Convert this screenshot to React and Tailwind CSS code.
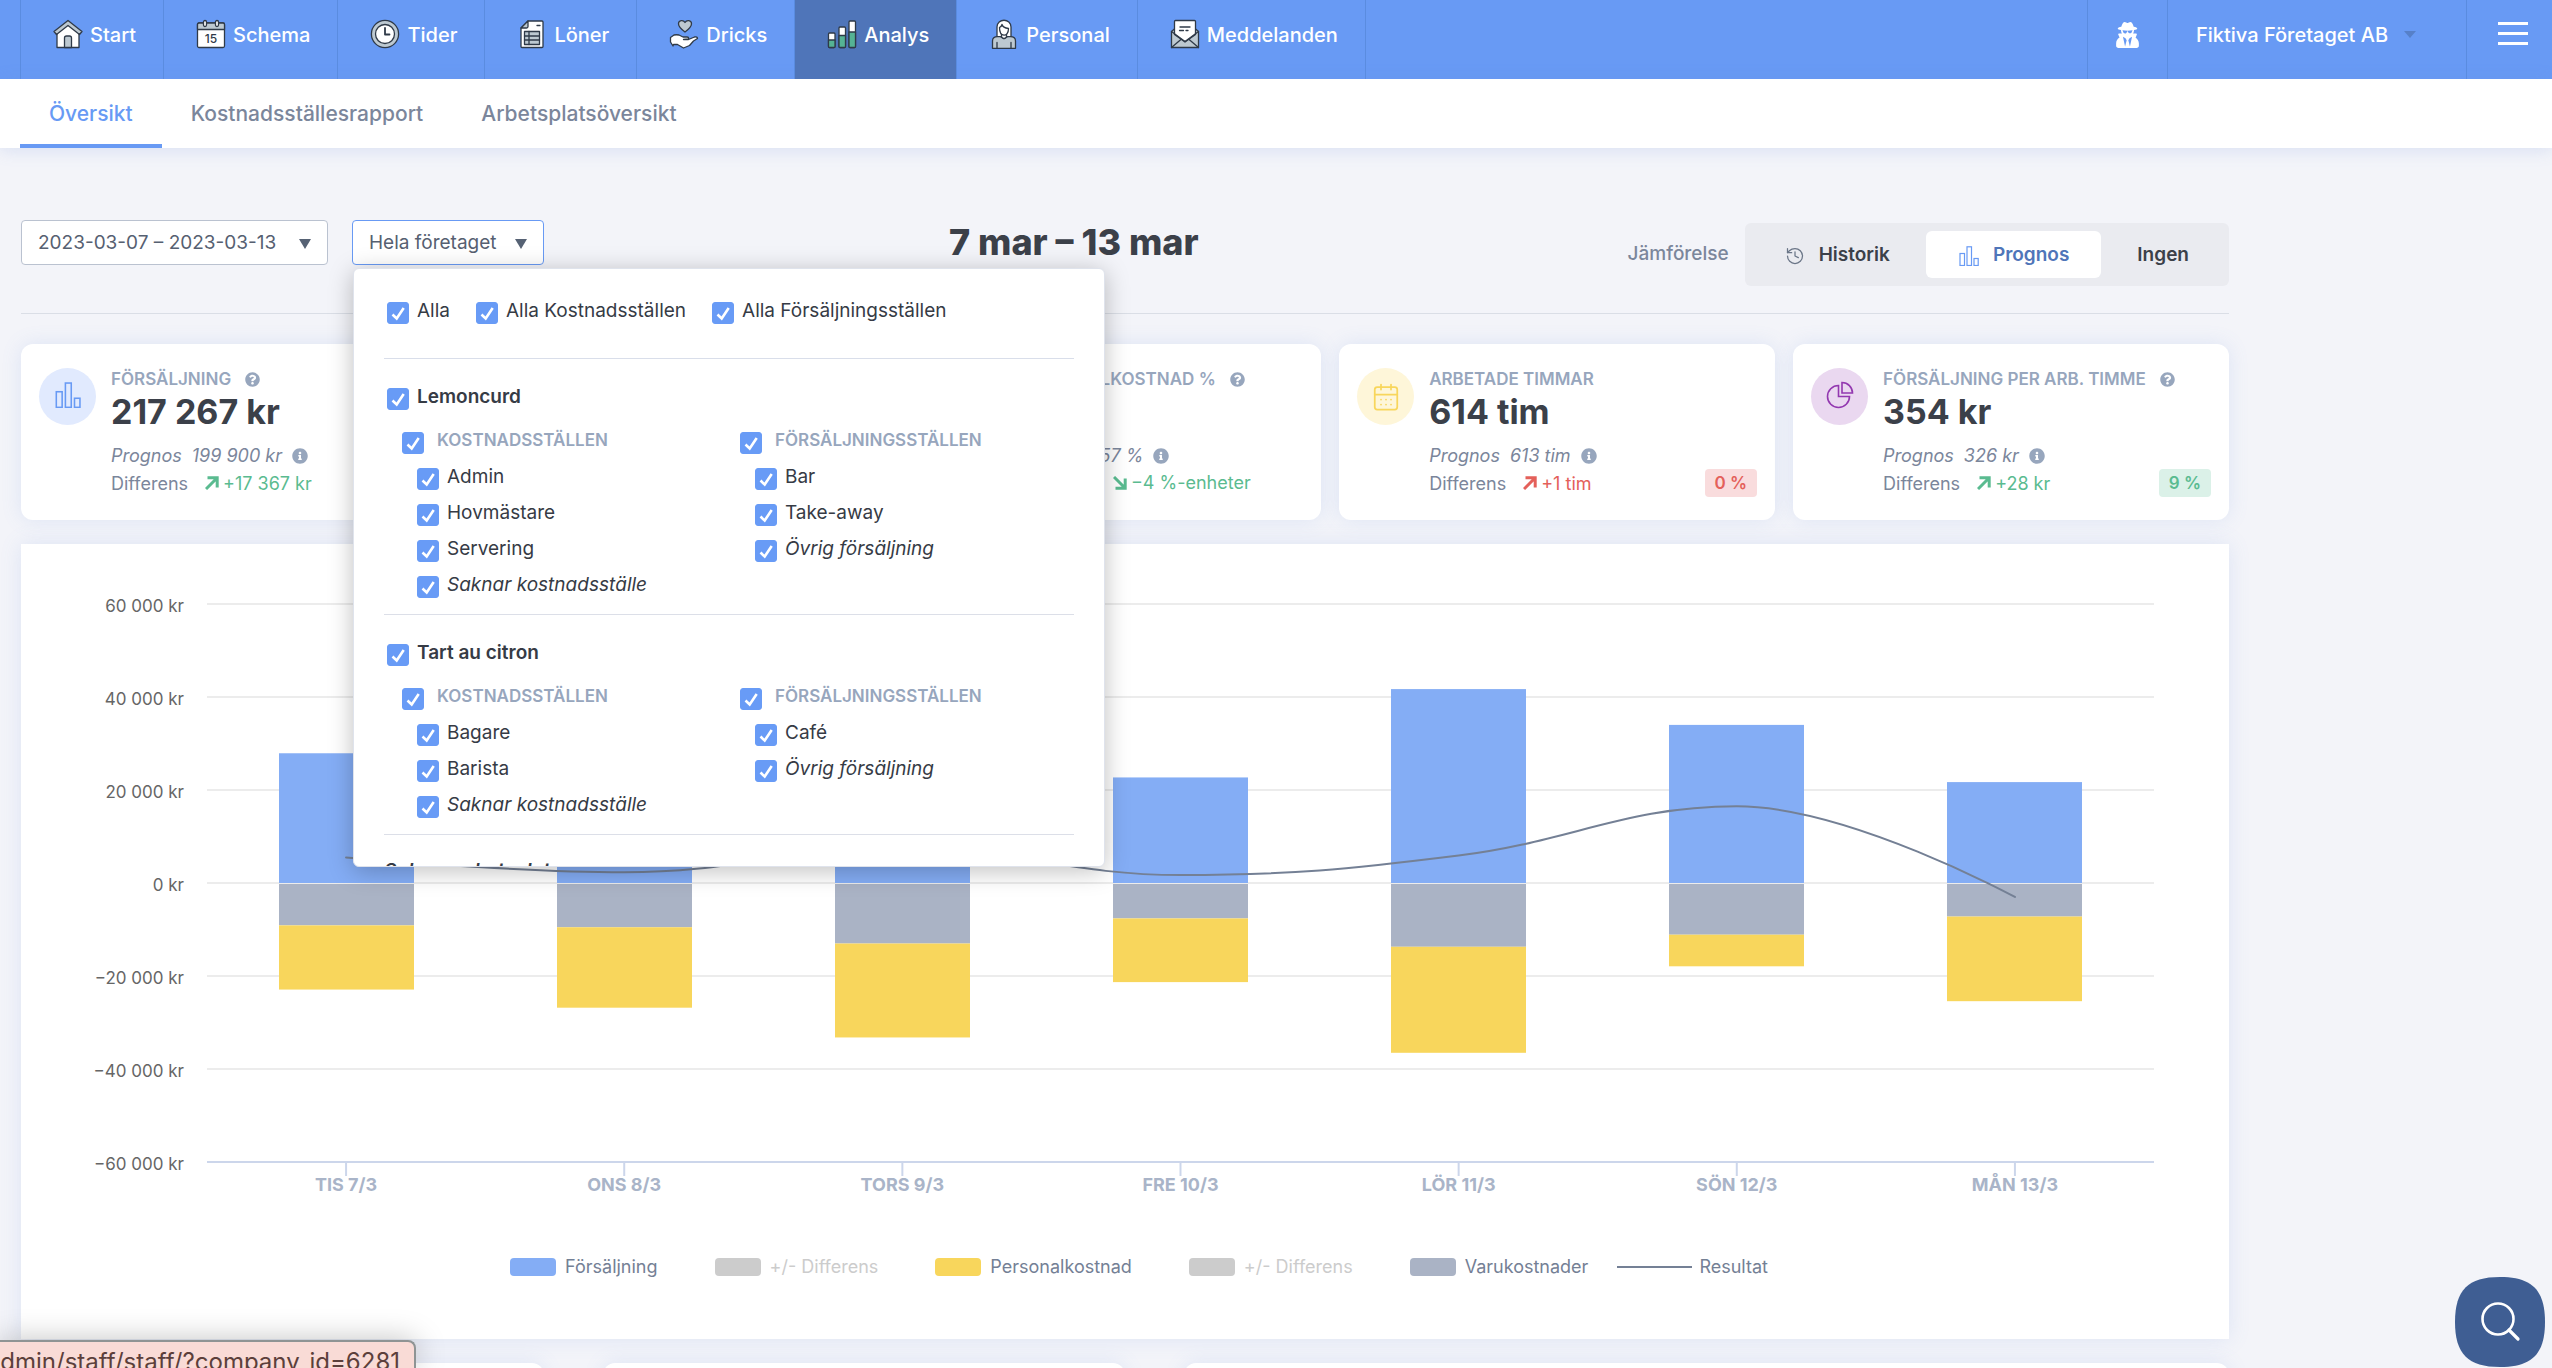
import React, { useState } from 'react';
import { CalendarDays, History } from 'lucide-react';
import { FaInfoCircle, FaQuestionCircle, FaUserSecret } from 'react-icons/fa';

const INK = '#2f3a48';
const TINT = '#bdc9d1';

const nav = [
  { label: 'Start', icon: HouseIcon },
  { label: 'Schema', icon: ScheduleIcon },
  { label: 'Tider', icon: ClockIcon },
  { label: 'Löner', icon: SheetIcon },
  { label: 'Dricks', icon: TipIcon },
  { label: 'Analys', icon: StatsIcon, active: true },
  { label: 'Personal', icon: PersonIcon },
  { label: 'Meddelanden', icon: MailIcon },
];

const tabs = ['Översikt', 'Kostnadsställesrapport', 'Arbetsplatsöversikt'];

const workplaces = [
  {
    name: 'Lemoncurd',
    cost: ['Admin', 'Hovmästare', 'Servering'],
    sales: ['Bar', 'Take-away'],
  },
  {
    name: 'Tart au citron',
    cost: ['Bagare', 'Barista'],
    sales: ['Café'],
  },
];

const stats = [
  { title: 'Försäljning', value: '217 267 kr', forecast: '199 900 kr', diff: '+17 367 kr', up: true, good: true, badge: '9 %', help: true, icon: 'bars' },
  { title: 'Resultat', value: '–', forecast: '–', diff: '–', up: true, good: true, icon: 'bars' },
  { title: 'Personalkostnad %', value: '53 %', forecast: '57 %', diff: '−4 %-enheter', up: false, good: true, help: true, icon: 'pie' },
  { title: 'Arbetade timmar', value: '614 tim', forecast: '613 tim', diff: '+1 tim', up: true, good: false, badge: '0 %', icon: 'calendar' },
  { title: 'Försäljning per arb. timme', value: '354 kr', forecast: '326 kr', diff: '+28 kr', up: true, good: true, badge: '9 %', help: true, icon: 'pie' },
];

// amounts in kr
const days = [
  { label: 'TIS 7/3', sales: 27900, goods: 8900, staff: 13800, result: 5500 },
  { label: 'ONS 8/3', sales: 27500, goods: 9300, staff: 17300, result: 2300 },
  { label: 'TORS 9/3', sales: 40500, goods: 12800, staff: 20200, result: 7500 },
  { label: 'FRE 10/3', sales: 22700, goods: 7400, staff: 13700, result: 1700 },
  { label: 'LÖR 11/3', sales: 41700, goods: 13500, staff: 22800, result: 5900 },
  { label: 'SÖN 12/3', sales: 34000, goods: 10900, staff: 6800, result: 16500 },
  { label: 'MÅN 13/3', sales: 21700, goods: 7000, staff: 18200, result: -3000 },
];

const legend = [
  { label: 'Försäljning', swatch: 'bg-[#84adf5]', text: 'text-[#748095]' },
  { label: '+/- Differens', swatch: 'bg-[#cccccc]', text: 'text-[#cccccc]' },
  { label: 'Personalkostnad', swatch: 'bg-[#f8d65c]', text: 'text-[#748095]' },
  { label: '+/- Differens', swatch: 'bg-[#cccccc]', text: 'text-[#cccccc]' },
  { label: 'Varukostnader', swatch: 'bg-[#aab3c5]', text: 'text-[#748095]' },
];

export default function App() {
  return (
    <div className="relative h-screen overflow-hidden bg-[#f3f4f9] font-['Inter',sans-serif] text-[#3b4049]">
      <TopBar />
      <SubNav />
      <main className="max-w-[2229px] pl-[21px] pt-[72px]">
        <Filters />
        <section className="mt-[30px] grid grid-cols-[10fr_10fr_9fr_10fr_10fr] gap-[18px]">
          {stats.map(s => <StatCard key={s.title} {...s} />)}
        </section>
        <section className="mt-6 bg-white pb-[59px] shadow-[0_0_20px_rgba(104,140,220,0.15)]">
          <Chart />
          <Legend />
        </section>
        <section className="mt-6 grid grid-cols-[1fr_1fr_2fr] gap-[59px]">
          <div className="h-40 rounded-xl bg-white shadow-[0_0_20px_rgba(104,140,220,0.15)]" />
          <div className="h-40 rounded-xl bg-white shadow-[0_0_20px_rgba(104,140,220,0.15)]" />
          <div className="h-40 rounded-xl bg-white shadow-[0_0_20px_rgba(104,140,220,0.15)]" />
        </section>
      </main>

      <div className="absolute bottom-0 left-0 flex h-7 w-[416px] justify-end overflow-hidden rounded-tr-lg border-r-2 border-t-2 border-[#8f9494] bg-[#f9dbd6] pr-3.5 pt-1 text-2xl text-[#5c3f3b] shadow-[0_0_30px_rgba(0,0,0,0.25)]">
        <span className="whitespace-nowrap">/admin/staff/staff/?company_id=6281</span>
      </div>

      <button aria-label="Sök" className="absolute bottom-px right-[7px] h-[90px] w-[90px]">
        <svg viewBox="0 0 90 90" className="h-full w-full">
          <path d="M45 0C77 0 90 13 90 45S77 90 45 90 0 77 0 45 13 0 45 0Z" fill="#3f5e93" />
          <circle cx="43" cy="42" r="15.5" fill="none" stroke="#fff" strokeWidth="2.6" />
          <path d="M54 53l9 9" stroke="#fff" strokeWidth="3.2" strokeLinecap="round" />
        </svg>
      </button>
    </div>
  );
}

function TopBar() {
  return (
    <header className="flex h-[79px] justify-between bg-[#689af4] text-xl font-medium leading-8 text-white">
      <nav className="ml-5 flex border-l border-[#5a8ce0]">
        {nav.map(({ label, icon: Icon, active }) => (
          <a
            key={label}
            href="#"
            className={'flex gap-[7px] border-r border-[#5a8ce0] pl-8 pr-[27px] pt-[19px] ' + (active ? 'bg-[#4f75b9]' : '')}
          >
            <svg viewBox="0 0 30 30" className="h-[30px] w-[30px]" fill="#fff" stroke={INK} strokeWidth="1.3" strokeLinejoin="round" strokeLinecap="round">
              <Icon />
            </svg>
            {label}
          </a>
        ))}
      </nav>
      <div className="flex">
        <button aria-label="Inkognito" className="flex w-20 justify-center border-l border-[#5a8ce0] pt-[22px]">
          <FaUserSecret className="h-[26px] w-[23px]" />
        </button>
        <button className="flex w-[299px] gap-4 border-l border-[#5a8ce0] pl-7 pt-[19px]">
          Fiktiva Företaget AB
          <svg viewBox="0 0 12 7" className="mt-3 h-[7px] w-3"><path d="M0 0h12L6 7z" fill="#5680c9" /></svg>
        </button>
        <button aria-label="Meny" className="flex w-[86px] flex-col gap-[7px] border-l border-[#5a8ce0] pl-[31px] pt-[22px]">
          <span className="h-[3px] w-[30px] bg-white" />
          <span className="h-[3px] w-[30px] bg-white" />
          <span className="h-[3px] w-[30px] bg-white" />
        </button>
      </div>
    </header>
  );
}

function SubNav() {
  return (
    <nav className="flex h-[69px] bg-white pl-5 text-[21px] font-medium leading-[70px] text-[#7b869b] shadow-[0_2px_16px_rgba(104,140,220,0.2)]">
      {tabs.map((tab, i) => (
        <a key={tab} href="#" className={'px-[29px] ' + (i === 0 ? 'border-b-4 border-[#689af4] text-[#689af4]' : '')}>{tab}</a>
      ))}
    </nav>
  );
}

function Triangle() {
  return <svg viewBox="0 0 12 10" className="h-[10px] w-3"><path d="M0 0h12L6 10z" fill="#566274" /></svg>;
}

function Filters() {
  const [open, setOpen] = useState(true);
  return (
    <div className="flex items-start justify-between border-b border-[#dadee6] pb-[27px]">
      <div className="flex gap-6 text-[19px] text-[#566071]">
        <button className="flex h-[45px] min-w-[307px] items-center justify-between rounded border border-[#bac2d0] bg-white px-4 pt-0.5">
          2023-03-07 – 2023-03-13
          <Triangle />
        </button>
        <div className="relative">
          <button onClick={() => setOpen(!open)} className="flex h-[45px] min-w-[192px] items-center justify-between gap-4 rounded border border-[#689af4] bg-white px-4 pt-0.5">
            Hela företaget
            <Triangle />
          </button>
          {open && <PlacePicker />}
        </div>
      </div>
      <h1 className="mr-6 text-4xl font-extrabold leading-[44px]">7 mar – 13 mar</h1>
      <div className="mt-[3px] flex items-center gap-4 text-[19px] font-medium text-[#7b869b]">
        Jämförelse
        <div className="flex rounded-md bg-[#eaebf0] p-2 font-semibold text-[#3b4049]">
          <button className="flex h-[47px] items-center gap-3.5 pl-8 pr-9 pt-0.5">
            <History className="h-5 w-5 text-[#6a7587]" strokeWidth={1.5} />
            Historik
          </button>
          <button className="flex h-[47px] items-center gap-3.5 rounded-md bg-white pl-[33px] pr-8 pt-0.5 text-[#4f75b9]">
            <svg viewBox="0 0 20 20" className="h-5 w-5"><BarsGlyph /></svg>
            Prognos
          </button>
          <button className="h-[47px] pl-9 pr-8 pt-0.5">Ingen</button>
        </div>
      </div>
    </div>
  );
}

function Check({ className = '', textClass = '', children }) {
  return (
    <label className={'flex h-9 items-center gap-2 ' + className}>
      <span className="mt-[3px] grid">
        <input type="checkbox" defaultChecked className="peer col-start-1 row-start-1 h-[22px] w-[22px] appearance-none rounded-[3px] border border-[#689bf6] bg-white checked:bg-[#689bf6]" />
        <svg viewBox="0 0 22 22" className="pointer-events-none invisible col-start-1 row-start-1 h-[22px] w-[22px] peer-checked:visible">
          <path d="M5.5 12.5l4.2 4 7-10.5" fill="none" stroke="#fff" strokeWidth="2.6" />
        </svg>
      </span>
      <span className={textClass}>{children}</span>
    </label>
  );
}

function PlacePicker() {
  const group = 'pl-[5px] text-[17px] font-semibold uppercase text-[#97a6bd]';
  return (
    <div className="absolute left-px top-12 z-10 h-[599px] w-[752px] overflow-hidden rounded-md border border-[#dfe3ec] bg-white px-[30px] pt-6 text-[19px] text-[#363b45] shadow-[0_4px_24px_rgba(0,0,0,0.25)]">
      <div className="flex gap-[26px] border-b border-[#d9deea] pb-[29px] pl-[3px]">
        <Check>Alla</Check>
        <Check>Alla Kostnadsställen</Check>
        <Check>Alla Försäljningsställen</Check>
      </div>
      {workplaces.map(w => (
        <div key={w.name} className="border-b border-[#dcdfe8] pb-[11px] pl-[3px] pt-5">
          <Check textClass="font-semibold">{w.name}</Check>
          <div className="mt-2 grid grid-cols-2 gap-x-1 pl-[15px]">
            <div>
              <Check textClass={group}>Kostnadsställen</Check>
              {w.cost.map(c => <Check key={c} className="pl-[15px]">{c}</Check>)}
              <Check className="pl-[15px]" textClass="italic">Saknar kostnadsställe</Check>
            </div>
            <div>
              <Check textClass={group}>Försäljningsställen</Check>
              {w.sales.map(s => <Check key={s} className="pl-[15px]">{s}</Check>)}
              <Check className="pl-[15px]" textClass="italic">Övrig försäljning</Check>
            </div>
          </div>
        </div>
      ))}
      <div className="pt-[22px] font-semibold italic">Saknar arbetsplats</div>
    </div>
  );
}

const circles = {
  bars: 'bg-[#e1eafe]',
  calendar: 'bg-[#fef6d9]',
  pie: 'bg-[#ead8f0]',
};

function StatCard({ title, value, forecast, diff, up, good, badge, help, icon }) {
  return (
    <article className="flex h-44 gap-[15px] rounded-xl bg-white px-[18px] pt-6 shadow-[0_0_20px_rgba(104,140,220,0.15)]">
      <div className={'flex h-[57px] w-[57px] shrink-0 items-center justify-center rounded-full ' + circles[icon]}>
        {icon === 'bars' && <svg viewBox="0 0 20 20" className="mb-1 h-[26px] w-[26px]"><BarsGlyph /></svg>}
        {icon === 'calendar' && (
          <CalendarDays className="h-[30px] w-[30px] text-[#f8d65c]" strokeWidth={1.4} />
        )}
        {icon === 'pie' && (
          <svg viewBox="0 0 28 28" className="mb-1 h-7 w-7" fill="none" stroke="#9338b0" strokeWidth="1.6">
            <path d="M12.5 4.5a11 11 0 1 0 11 11h-11z" />
            <path d="M16 1.5v10.5h10.5A10.5 10.5 0 0 0 16 1.5z" />
          </svg>
        )}
      </div>
      <div className="min-w-0 flex-1 text-lg text-[#7b869b]">
        <h2 className="flex items-center gap-3.5 whitespace-nowrap text-[17px] font-semibold uppercase leading-[22px] text-[#97a6bd]">
          {title}
          {help && <FaQuestionCircle className="h-[15px] w-[15px]" />}
        </h2>
        <p className="text-[34px] font-bold leading-[44px] text-[#3b4049]">{value}</p>
        <p className="mt-2 flex items-center gap-2.5 italic leading-[27px]">
          Prognos <span>{forecast}</span>
          <FaInfoCircle className="h-4 w-4 text-[#97a6bd]" />
        </p>
        <div className="flex items-center leading-[27px]">
          Differens
          <span className={'ml-[17px] flex items-center gap-1 ' + (good ? 'text-[#5abb90]' : 'text-[#e4605a]')}>
            <svg viewBox="0 0 14 14" className="h-3.5 w-3.5" fill="none" stroke="currentColor" strokeWidth="3">
              {up ? <path d="M1 13L11.5 2.5M2.5 1.8h9.7v9.7" /> : <path d="M1 1l10.500 10.500M12.200 2.500v9.700H2.500" />}
            </svg>
            {diff}
          </span>
          {badge && (
            <span className={'ml-auto rounded px-2.5 text-[17px] font-semibold leading-7 ' + (good ? 'bg-[#dbf1e8] text-[#5abb90]' : 'bg-[#f9dcdd] text-[#e4605a]')}>
              {badge}
            </span>
          )}
        </div>
      </div>
    </article>
  );
}

const LEFT = 186;
const RIGHT = 2133;
const ZERO = 339;
const STEP = (RIGHT - LEFT) / days.length;
const BAR = 135;

function px(kr) {
  return (kr * 93) / 20000;
}

function formatKr(kr) {
  const n = Math.abs(kr).toString().replace(/000$/, ' 000');
  return (kr < 0 ? '−' : '') + n + ' kr';
}

// smoothed line whose control points never pass the neighbouring values
function spline(points) {
  let d = `M${points[0].x} ${points[0].y}`;
  let out = points[0];
  for (let i = 1; i < points.length; i++) {
    const p = points[i];
    const prev = points[i - 1];
    const next = points[i + 1];
    let left = p;
    let right = p;
    if (next) {
      left = { x: (1.5 * p.x + prev.x) / 2.5, y: (1.5 * p.y + prev.y) / 2.5 };
      right = { x: (1.5 * p.x + next.x) / 2.5, y: (1.5 * p.y + next.y) / 2.5 };
      const shift = ((right.y - left.y) * (right.x - p.x)) / (right.x - left.x) + p.y - right.y;
      left.y += shift;
      right.y += shift;
      const clampL = Math.min(Math.max(left.y, Math.min(prev.y, p.y)), Math.max(prev.y, p.y));
      if (clampL !== left.y) { left.y = clampL; right.y = 2 * p.y - clampL; }
      const clampR = Math.min(Math.max(right.y, Math.min(next.y, p.y)), Math.max(next.y, p.y));
      if (clampR !== right.y) { right.y = clampR; left.y = 2 * p.y - clampR; }
    }
    d += ` C${out.x} ${out.y} ${left.x} ${left.y} ${p.x} ${p.y}`;
    out = right;
  }
  return d;
}

function Chart() {
  const levels = [60000, 40000, 20000, 0, -20000, -40000, -60000];
  const line = days.map((d, i) => ({ x: LEFT + STEP * (i + 0.5), y: ZERO - px(d.result) }));
  return (
    <svg viewBox="0 0 2208 676" className="block w-full" role="img" aria-label="Försäljning och kostnader per dag">
      {levels.map(kr => (
        <g key={kr}>
          <path d={`M${LEFT} ${ZERO - px(kr)}H${RIGHT}`} stroke={kr === -60000 ? '#ccd6eb' : '#e6e6e6'} strokeWidth={kr === -60000 ? 2 : 1.5} />
          <text x="163" y={ZERO - px(kr) + 8} textAnchor="end" fontSize="17" fill="#666666">{formatKr(kr)}</text>
        </g>
      ))}
      {days.map((d, i) => {
        const mid = LEFT + STEP * (i + 0.5);
        const x = Math.round(mid - BAR / 2);
        return (
          <g key={d.label}>
            <rect x={x} y={ZERO - px(d.sales)} width={BAR} height={px(d.sales)} fill="#84adf5" />
            <rect x={x} y={ZERO + 1} width={BAR} height={px(d.goods)} fill="#aab3c5" />
            <rect x={x} y={ZERO + 1 + px(d.goods)} width={BAR} height={px(d.staff)} fill="#f8d65c" />
            <path d={`M${mid} 618v14`} stroke="#ccd6eb" strokeWidth="2" />
            <text x={mid} y="647" textAnchor="middle" fontSize="18" fontWeight="700" fill="#a9b4c8">{d.label}</text>
          </g>
        );
      })}
      <path d={spline(line)} fill="none" stroke="#748095" strokeWidth="2" strokeLinecap="round" />
    </svg>
  );
}

function Legend() {
  return (
    <ul className="flex justify-center pl-7 pt-[34px] text-lg leading-[26px]">
      {legend.map((item, i) => (
        <li key={i} className={'mr-[57px] flex items-center gap-[9px] ' + item.text}>
          <span className={'h-[18px] w-[46px] rounded ' + item.swatch} />
          {item.label}
        </li>
      ))}
      <li className="-ml-7 flex items-center gap-[7px] text-[#748095]">
        <span className="h-0.5 w-[75px] bg-[#748095]" />
        Resultat
      </li>
    </ul>
  );
}

function BarsGlyph() {
  return (
    <g fill="none" stroke="#689af4" strokeWidth="1.2">
      <rect x="1" y="7.500" width="4.500" height="12" />
      <rect x="8" y="0.800" width="4.500" height="18.700" />
      <rect x="15" y="12.500" width="4.200" height="7" />
    </g>
  );
}

function HouseIcon() {
  return (
    <>
      <path d="M4 12v16.500h22V12L15 3z" />
      <path d="M15 1.500L29 12.500l-2.500 3L15 6.500 3.500 15.500 1 12.500z" fill={TINT} />
      <path d="M11.500 28.500V19q0-2 2-2h3q2 0 2 2v9.500z" fill={TINT} />
    </>
  );
}

function ScheduleIcon() {
  return (
    <>
      <rect x="1.500" y="4" width="27" height="24.500" rx="1.500" />
      <path d="M1.500 10.500V5.500q0-1.500 1.500-1.500h24q1.500 0 1.500 1.500v5z" fill={TINT} />
      <rect x="7.500" y="1.500" width="3" height="6" rx="1.500" />
      <rect x="19.500" y="1.500" width="3" height="6" rx="1.500" />
      <text x="15" y="24" textAnchor="middle" fontSize="12" fontWeight="500" fill={INK} stroke="none">15</text>
    </>
  );
}

function ClockIcon() {
  return (
    <>
      <circle cx="15" cy="15" r="13.600" fill={TINT} />
      <circle cx="15" cy="15" r="9.500" />
      <path d="M15 9v6.500h4.500" fill="none" strokeWidth="1.800" />
    </>
  );
}

function SheetIcon() {
  return (
    <>
      <path d="M11 2h14q1 0 1 1v24.500q0 1-1 1H5q-1 0-1-1V9z" />
      <path d="M11 2v5.500q0 1.500-1.500 1.500H4z" fill={TINT} />
      <path d="M20 6.500h3" />
      <rect x="7.500" y="12.500" width="15" height="13" fill={TINT} />
      <path d="M7.500 17h15M7.500 21h15M12 12.500v13" fill="none" />
    </>
  );
}

function TipIcon() {
  return (
    <>
      <path d="M16 13C12 10 9.500 7.500 9.500 4.700 9.500 1 14.500.500 16 3.500c1.500-3 6.500-2.500 6.500 1.200C22.500 7.500 20 10 16 13z" fill={TINT} />
      <path d="M1.500 18.500L5 16q2.500-.500 5 0l4 2h4q2 0 1.500 2l-5 .500h5l6-2.500q3-.500 3 1.500l-4 2.500-4 4.500-6 2.500-6-3.500H4.500L4 27l-2.500-4z" />
    </>
  );
}

function StatsIcon() {
  const bars = [[1.500, 14, 21], [12, 8, 16.500], [22, 2, 13]];
  return bars.map(([x, top, split]) => (
    <g key={x}>
      <rect x={x} y={top} width="6.500" height={28.500 - top} rx="1" />
      <path d={`M${x} ${split}h6.500V27.500q0 1-1 1h-4.500q-1 0-1-1z`} fill="#55b394" />
    </g>
  ));
}

function PersonIcon() {
  return (
    <>
      <path d="M8 18V8c0-9 14-9 14 0v10z" />
      <path d="M3.500 29.300V22c0-3 2-4.300 5-4.300h3l3.500 2 3.500-2h3c3 0 5 1.300 5 4.300v7.300z" fill={TINT} />
      <path d="M12.500 15v3q2.500 3 5 0v-3" />
      <path d="M10.500 8.500c0 10 9 10 9 1C15 9 13.500 7.500 13 5.500c-.500 2-1.500 2.500-2.500 3z" />
      <path d="M8 29v-5.500M22 29v-5.500" />
    </>
  );
}

function MailIcon() {
  return (
    <>
      <path d="M1.500 12.500L5 9.500h20l3.500 3v16h-27z" fill={TINT} />
      <path d="M4.500 15.500V2.500q0-1 1-1h19q1 0 1 1v13L15 23z" />
      <path d="M1.500 12.500L15 22.500l13.500-10M1.500 28.500l10-8.500M28.500 28.500l-10-8.500" fill="none" />
      <path d="M10 8h10M9.500 11.500h4M16 11.500h2" />
    </>
  );
}
